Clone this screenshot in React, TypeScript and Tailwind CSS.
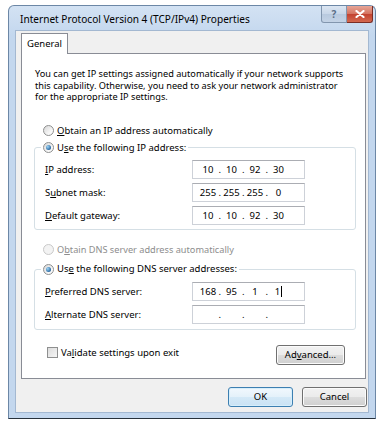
import { Fragment, type ReactNode } from 'react';

function Radio({ checked, disabled }: { checked?: boolean; disabled?: boolean }) {
  return (
    <span
      className={`flex h-[11px] w-[11px] shrink-0 items-center justify-center rounded-full border ${
        disabled
          ? 'border-[#c9c9c9] bg-[#f3f3f3]'
          : 'border-[#8e8f8f] bg-[linear-gradient(135deg,#d6d6d6,#f4f4f4_60%,#ffffff)]'
      }`}
    >
      {checked && (
        <span className="h-[5px] w-[5px] rounded-full bg-[radial-gradient(circle_at_35%_35%,#9fd6f7,#2b6aa3_70%,#1b4a78)]" />
      )}
    </span>
  );
}

function IpBox({ parts, caret }: { parts: string[]; caret?: boolean }) {
  return (
    <div className="flex h-[19px] w-[113px] items-center border border-[#cdd1d8] border-t-[#abadb3] bg-white pl-[5.5px] leading-[12px]">
      {parts.map((p, i) => (
        <Fragment key={i}>
          <span className="flex w-[19px] items-center justify-center">
            {p}
            {caret && i === 3 && <span className="ml-[1px] inline-block h-[11px] w-[1px] bg-black" />}
          </span>
          {i < 3 && <span className="w-[4.5px] text-center">.</span>}
        </Fragment>
      ))}
    </div>
  );
}

function Row({ label, parts, caret }: { label: ReactNode; parts: string[]; caret?: boolean }) {
  return (
    <div className="flex h-[19px] items-center">
      <span className="w-[157px] pl-[10px]">{label}</span>
      <IpBox parts={parts} caret={caret} />
    </div>
  );
}

function Btn({ children, primary, w }: { children: ReactNode; primary?: boolean; w: string }) {
  return (
    <button
      type="button"
      className={`flex h-[20px] items-center justify-center rounded-[3px] border text-[9.5px] leading-[12px] text-black ${w} ${
        primary
          ? 'border-[#3c7fb1] bg-[linear-gradient(#f1f8fd,#e4f1fa_50%,#d4e9f7_50%,#c9e2f4)] shadow-[inset_0_0_0_1px_#d6eefb]'
          : 'border-[#707070] bg-[linear-gradient(#f2f2f2,#ebebeb_50%,#dddddd_50%,#cfcfcf)] shadow-[inset_0_0_0_1px_#fbfbfb]'
      }`}
    >
      {children}
    </button>
  );
}

export default function App() {
  return (
    <div className="h-[423px] w-[381px] bg-white pl-[8px] pt-[5px] font-['Noto_Sans',sans-serif] text-[9.5px] text-black">
      {/* Window */}
      <div className="flex h-[414px] w-[368px] flex-col rounded-t-[6px] border border-[#6c87a6] border-b-[#27313b] bg-[linear-gradient(#d3e2f3,#c3d7ee_30px,#c3d7ee)] px-[6px] pb-[5px]">
        {/* Title bar */}
        <div className="flex h-[24px] items-start justify-between">
          <span className="pl-[5px] pt-[6px] text-[10.1px] leading-[14px] text-black">
            Internet Protocol Version 4 (TCP/IPv4) Properties
          </span>
          <div className="-mr-[4px] flex">
            <div className="flex h-[17px] w-[26px] items-center justify-center rounded-bl-[3px] border border-t-0 border-[#8296ae] bg-[linear-gradient(#dce6f2,#c8d6e8_50%,#b8c9de_50%,#c4d3e6)] text-[10px] font-bold leading-none text-[#5b6f88]">
              ?
            </div>
            <div className="flex h-[17px] w-[26px] items-center justify-center rounded-br-[3px] border border-l-0 border-t-0 border-[#7a2d25] bg-[linear-gradient(#e6a597,#d4725f_50%,#c2412f_50%,#d3684f)]">
              <svg width="10" height="8" viewBox="0 0 10 8">
                <path d="M1.5 1 L8.5 7 M8.5 1 L1.5 7" stroke="#ffffff" strokeWidth="2.2" strokeLinecap="round" />
              </svg>
            </div>
          </div>
        </div>

        {/* Client area */}
        <div className="flex flex-1 flex-col border border-[#a3b8d1] bg-[#f0f0f0]">
          {/* Tab */}
          <div className="ml-[5px] mt-[2px] flex">
            <div className="relative z-10 -mb-px flex h-[21px] w-[47px] items-center justify-center border border-b-0 border-[#898c95] bg-white pb-[1px] leading-[12px]">
              General
            </div>
          </div>

          {/* Tab panel */}
          <div className="ml-[5px] flex h-[326px] w-[345px] flex-col border border-[#898c95] bg-white leading-[12px]">
            <p className="ml-[13px] mt-[14px] text-[9.2px] leading-[11.5px]">
              You can get IP settings assigned automatically if your network supports
              <br />
              this capability. Otherwise, you need to ask your network administrator
              <br />
              for the appropriate IP settings.
            </p>

            <div className="ml-[21px] mt-[21px] flex h-[14px] items-center gap-[3px]">
              <Radio />
              <span>
                <u>O</u>btain an IP address automatically
              </span>
            </div>

            <fieldset className="ml-[12px] mt-[3px] w-[322px] rounded-[3px] border border-[#d5dfe5] pb-[4px] pt-[5.5px]">
              <legend className="ml-[6px] flex h-[14px] items-center gap-[3px] px-[2px]">
                <Radio checked />
                <span>
                  U<u>s</u>e the following IP address:
                </span>
              </legend>
              <div className="flex flex-col gap-[4px]">
                <Row label={<><u>I</u>P address:</>} parts={['10', '10', '92', '30']} />
                <Row label={<>S<u>u</u>bnet mask:</>} parts={['255', '255', '255', '0']} />
                <Row label={<><u>D</u>efault gateway:</>} parts={['10', '10', '92', '30']} />
              </div>
            </fieldset>

            <div className="ml-[21px] mt-[12.5px] flex h-[14px] items-center gap-[3px] text-[#8d8d8d]">
              <Radio disabled />
              <span className="text-[9.2px]">
                O<u>b</u>tain DNS server address automatically
              </span>
            </div>

            <fieldset className="ml-[12px] mt-[5.5px] w-[322px] rounded-[3px] border border-[#d5dfe5] pb-[5px] pt-[6px]">
              <legend className="ml-[6px] flex h-[14px] items-center gap-[3px] px-[2px]">
                <Radio checked />
                <span>
                  Us<u>e</u> the following DNS server addresses:
                </span>
              </legend>
              <div className="flex flex-col gap-[4px]">
                <Row label={<><u>P</u>referred DNS server:</>} parts={['168', '95', '1', '1']} caret />
                <Row label={<><u>A</u>lternate DNS server:</>} parts={['', '', '', '']} />
              </div>
            </fieldset>

            <div className="mt-[14.5px] flex items-center justify-between pl-[25px] pr-[20px]">
              <div className="mb-[4px] flex items-center gap-[3px]">
                <span className="h-[11px] w-[11px] border border-[#8e8f8f] bg-[linear-gradient(135deg,#dcdcdc,#f6f6f6)]" />
                <span>
                  Va<u>l</u>idate settings upon exit
                </span>
              </div>
              <Btn w="w-[69px]">
                Ad<u>v</u>anced...
              </Btn>
            </div>
          </div>

          {/* Dialog buttons */}
          <div className="mt-[8px] flex justify-end gap-[9px] pr-[1px]">
            <Btn w="w-[65px]" primary>
              OK
            </Btn>
            <Btn w="w-[65px]">Cancel</Btn>
          </div>
        </div>
      </div>
    </div>
  );
}
